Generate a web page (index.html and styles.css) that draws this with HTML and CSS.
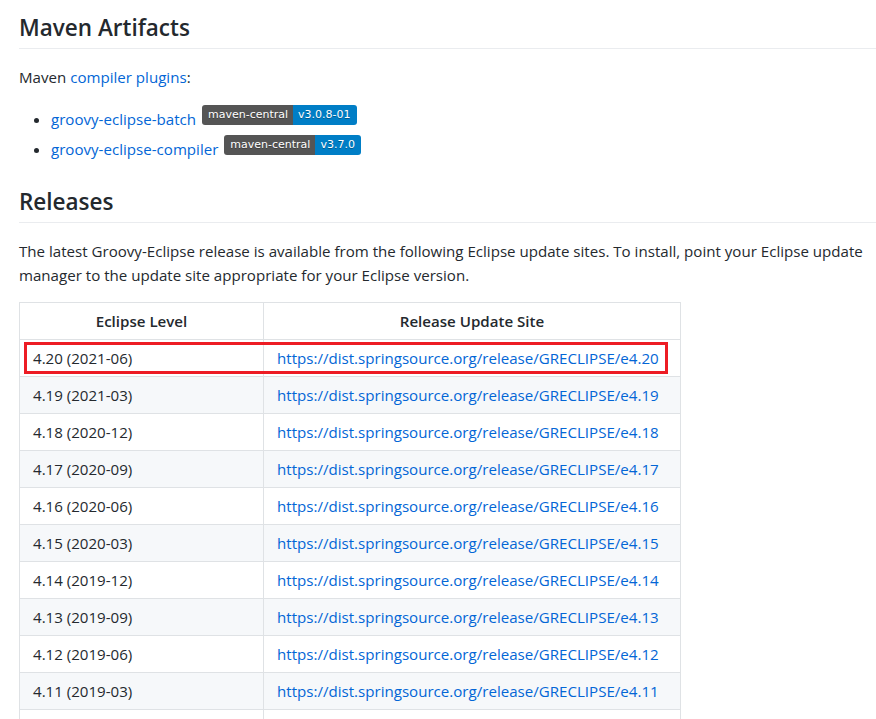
FILE: index.html
```html
<!DOCTYPE html>
<html>
<head>
<meta charset="utf-8">
<link rel="stylesheet" href="styles.css">
</head>
<body>
<div class="markdown">
  <h2 class="heading">Maven Artifacts</h2>
  <p class="para">Maven <a class="link" href="#">compiler plugins</a>:</p>
  <ul class="list">
    <li class="item"><a class="link" href="#">groovy-eclipse-batch</a> <span class="badge"><span class="badge-label">maven-central</span><span class="badge-value">v3.0.8-01</span></span></li>
    <li class="item"><a class="link" href="#">groovy-eclipse-compiler</a> <span class="badge"><span class="badge-label">maven-central</span><span class="badge-value">v3.7.0</span></span></li>
  </ul>
  <h2 class="heading">Releases</h2>
  <p class="para intro">The latest Groovy-Eclipse release is available from the following Eclipse update sites. To install, point your Eclipse update manager to the update site appropriate for your Eclipse version.</p>
  <div class="table-wrap">
    <table class="releases">
      <thead>
        <tr><th class="col-level">Eclipse Level</th><th class="col-site">Release Update Site</th></tr>
      </thead>
      <tbody>
        <tr><td>4.20 (2021-06)</td><td><a class="link" href="#">https://dist.springsource.org/release/GRECLIPSE/e4.20</a></td></tr>
        <tr><td>4.19 (2021-03)</td><td><a class="link" href="#">https://dist.springsource.org/release/GRECLIPSE/e4.19</a></td></tr>
        <tr><td>4.18 (2020-12)</td><td><a class="link" href="#">https://dist.springsource.org/release/GRECLIPSE/e4.18</a></td></tr>
        <tr><td>4.17 (2020-09)</td><td><a class="link" href="#">https://dist.springsource.org/release/GRECLIPSE/e4.17</a></td></tr>
        <tr><td>4.16 (2020-06)</td><td><a class="link" href="#">https://dist.springsource.org/release/GRECLIPSE/e4.16</a></td></tr>
        <tr><td>4.15 (2020-03)</td><td><a class="link" href="#">https://dist.springsource.org/release/GRECLIPSE/e4.15</a></td></tr>
        <tr><td>4.14 (2019-12)</td><td><a class="link" href="#">https://dist.springsource.org/release/GRECLIPSE/e4.14</a></td></tr>
        <tr><td>4.13 (2019-09)</td><td><a class="link" href="#">https://dist.springsource.org/release/GRECLIPSE/e4.13</a></td></tr>
        <tr><td>4.12 (2019-06)</td><td><a class="link" href="#">https://dist.springsource.org/release/GRECLIPSE/e4.12</a></td></tr>
        <tr><td>4.11 (2019-03)</td><td><a class="link" href="#">https://dist.springsource.org/release/GRECLIPSE/e4.11</a></td></tr>
        <tr class="cut-row"><td></td><td></td></tr>
      </tbody>
    </table>
    <div class="highlight"></div>
  </div>
</div>
</body>
</html>
```
FILE: styles.css
```css
html, body {
  margin: 0;
  padding: 0;
  overflow: hidden;
  background: #fff;
}
.markdown {
  width: 880px;
  padding: 13px 0 0 19px;
  font-family: "Open Sans", "Noto Sans", sans-serif;
  font-size: 15.1px;
  line-height: 24px;
  color: #24292e;
}
.heading {
  margin: 26px 0 16px;
  padding-bottom: 5px;
  font-size: 22.5px;
  line-height: 30px;
  font-weight: 600;
  border-bottom: 1px solid #eaecef;
}
.markdown .heading:first-child {
  margin-top: 0;
}
.para {
  margin: 0 0 16px;
}
.intro {
  margin-bottom: 15px;
}
.link {
  color: #0366d6;
  text-decoration: none;
}
.list {
  margin: 0 0 16px;
  padding-left: 32px;
}
.item + .item {
  margin-top: 4px;
}
.badge {
  display: inline-flex;
  height: 20px;
  margin-left: 2px;
  border-radius: 3px;
  overflow: hidden;
  vertical-align: 7px;
  font-family: "DejaVu Sans", Verdana, sans-serif;
  font-size: 11px;
  line-height: 20px;
  color: #fff;
  text-shadow: 0 1px 0 rgba(1, 1, 1, 0.3);
}
.badge-label {
  background: #555;
  padding: 0 5px 0 6px;
}
.badge-value {
  background: #007ec6;
  padding: 0 6px 0 5px;
}
.table-wrap {
  position: relative;
  width: 662px;
}
.releases {
  border-collapse: collapse;
  border-spacing: 0;
  table-layout: fixed;
  width: 662px;
}
.releases th,
.releases td {
  border: 1px solid #dfe2e5;
  padding: 6px 13px;
  height: 24px;
  text-align: left;
  white-space: nowrap;
}
.releases th {
  font-weight: 600;
  text-align: center;
}
.col-level {
  width: 217px;
}
.releases tbody tr:nth-child(even) {
  background: #f6f8fa;
}
.highlight {
  position: absolute;
  left: 5px;
  top: 40px;
  width: 644px;
  height: 32px;
  box-sizing: border-box;
  border: 3px solid #ed1c24;
}
```
